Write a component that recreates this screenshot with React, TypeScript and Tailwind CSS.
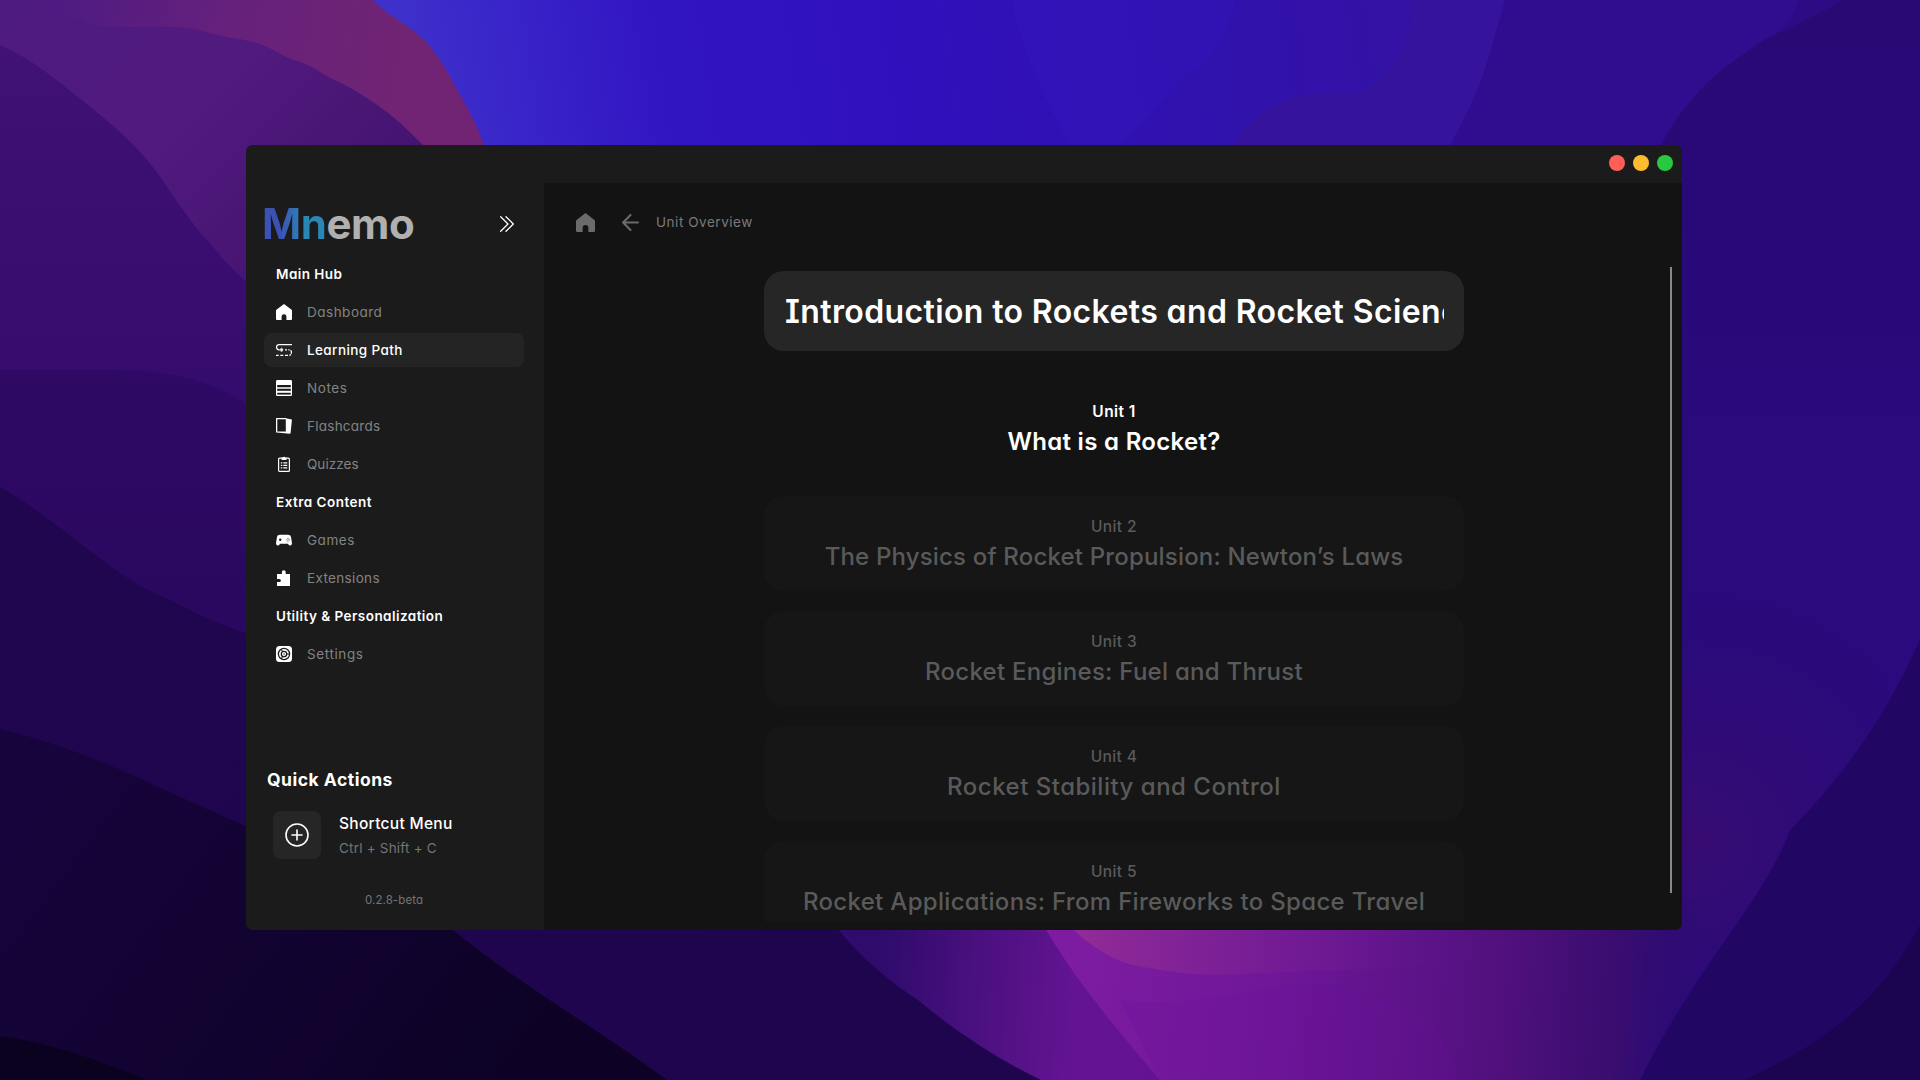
import React from "react";

const FONT =
  "font-['Inter','Noto_Sans',sans-serif] [font-feature-settings:'cv11','cv08','calt'_0]";

function Wallpaper() {
  return (
    <svg className="absolute inset-0 h-full w-full" viewBox="0 0 1920 1080" preserveAspectRatio="none">
      <defs>
        <linearGradient id="blue" gradientUnits="userSpaceOnUse" x1="420" y1="120" x2="1480" y2="-40">
          <stop offset="0" stopColor="#3e30cb" />
          <stop offset="0.1" stopColor="#3824c8" />
          <stop offset="0.22" stopColor="#3216c2" />
          <stop offset="0.45" stopColor="#3010bc" />
          <stop offset="0.75" stopColor="#3012ac" />
          <stop offset="1" stopColor="#3411a0" />
        </linearGradient>
        <linearGradient id="pink" gradientUnits="userSpaceOnUse" x1="60" y1="0" x2="400" y2="60">
          <stop offset="0" stopColor="#4f1b82" />
          <stop offset="0.5" stopColor="#66217c" />
          <stop offset="1" stopColor="#702473" />
        </linearGradient>
        <linearGradient id="violet" gradientUnits="userSpaceOnUse" x1="0" y1="0" x2="300" y2="300">
          <stop offset="0" stopColor="#4e1b80" />
          <stop offset="0.5" stopColor="#511a7e" />
          <stop offset="1" stopColor="#43136f" />
        </linearGradient>
        <linearGradient id="plum" gradientUnits="userSpaceOnUse" x1="0" y1="60" x2="0" y2="500">
          <stop offset="0" stopColor="#3f1274" />
          <stop offset="0.5" stopColor="#380d6f" />
          <stop offset="1" stopColor="#310b6c" />
        </linearGradient>
        <linearGradient id="deep" gradientUnits="userSpaceOnUse" x1="0" y1="370" x2="0" y2="640">
          <stop offset="0" stopColor="#2f0965" />
          <stop offset="1" stopColor="#2a085f" />
        </linearGradient>
        <linearGradient id="ink" gradientUnits="userSpaceOnUse" x1="100" y1="560" x2="700" y2="1080">
          <stop offset="0" stopColor="#20064f" />
          <stop offset="1" stopColor="#1e054d" />
        </linearGradient>
        <linearGradient id="night" gradientUnits="userSpaceOnUse" x1="60" y1="750" x2="500" y2="1080">
          <stop offset="0" stopColor="#17043c" />
          <stop offset="1" stopColor="#0d0226" />
        </linearGradient>
        <linearGradient id="glow" gradientUnits="userSpaceOnUse" x1="880" y1="1000" x2="1700" y2="1040">
          <stop offset="0" stopColor="#2f0b6c" />
          <stop offset="0.12" stopColor="#4b1080" />
          <stop offset="0.24" stopColor="#641492" />
          <stop offset="0.5" stopColor="#631390" />
          <stop offset="0.75" stopColor="#4f107b" />
          <stop offset="0.9" stopColor="#390d70" />
          <stop offset="1" stopColor="#2b0a6e" stopOpacity="0" />
        </linearGradient>
        <linearGradient id="magenta" gradientUnits="userSpaceOnUse" x1="1080" y1="940" x2="1560" y2="1000">
          <stop offset="0" stopColor="#7d1ca0" />
          <stop offset="0.4" stopColor="#6f1798" />
          <stop offset="1" stopColor="#551283" stopOpacity="0" />
        </linearGradient>
        <linearGradient id="rose" gradientUnits="userSpaceOnUse" x1="1080" y1="940" x2="1460" y2="960">
          <stop offset="0" stopColor="#912b97" />
          <stop offset="1" stopColor="#66188e" stopOpacity="0" />
        </linearGradient>
        <linearGradient id="right" gradientUnits="userSpaceOnUse" x1="0" y1="0" x2="0" y2="420">
          <stop offset="0" stopColor="#290974" />
          <stop offset="1" stopColor="#2a0a7c" />
        </linearGradient>
        <radialGradient id="haze" gradientUnits="userSpaceOnUse" cx="1700" cy="840" r="250">
          <stop offset="0" stopColor="#370c72" />
          <stop offset="1" stopColor="#2c0a76" stopOpacity="0" />
        </radialGradient>
      </defs>
      <rect width="1920" height="1080" fill="url(#blue)" />
      <path d="M1012 0H1235C1232 30 1215 60 1180 80C1150 115 1110 170 1075 155C1050 110 1020 50 1012 0Z" fill="#3318bf" opacity="0.35" />
      <path d="M1415 0C1410 45 1385 94 1345 94C1300 94 1270 92 1233 145V200H1700V0Z" fill="#35139c" />
      <path d="M1505 0C1490 50 1485 85 1450 145V200H1920V0Z" fill="#300d8e" />
      <path d="M1799 0C1793 15 1788 25 1780 31L1756 45L1800 60L1842 0Z" fill="#2d0b84" />
      <path d="M1842 0C1815 18 1780 30 1756 45C1735 60 1720 70 1707 83C1690 100 1672 122 1661 145L1600 300V900H1300V1080H1920V0Z" fill="url(#right)" />
      <rect x="1450" y="590" width="470" height="490" fill="url(#haze)" />
      <path d="M700 900H1720V1080H700Z" fill="url(#glow)" />
      <path d="M1920 640C1880 730 1830 790 1790 830C1765 900 1700 960 1640 1080H1920Z" fill="#220664" />
      <path d="M1920 925C1880 1000 1830 1040 1745 1080H1920Z" fill="#1b0450" />
      <path d="M1030 900C1060 960 1100 1010 1160 1080H1560V900Z" fill="url(#magenta)" />
      <path d="M1060 915C1090 950 1120 965 1150 968C1200 978 1240 974 1290 972C1350 968 1400 972 1450 960V915Z" fill="url(#rose)" />
      <path d="M1120 1000C1210 1010 1270 980 1315 983C1360 985 1380 1000 1410 1010C1440 1020 1450 1050 1460 1080H1160Z" fill="#6a1199" opacity="0.2" />
      <path d="M0 0H373C385 14 405 22 422 38C431 46 436 54 441 62C450 75 454 84 459 93C470 112 478 128 484 145V400H0Z" fill="url(#pink)" />
      <path d="M0 0H35C70 15 90 27 110 27C150 27 190 25 202 31C225 38 240 38 257 43C275 49 285 58 294 60C312 64 322 75 337 81C352 88 368 98 380 107C398 120 410 132 423 145V400H0Z" fill="url(#violet)" />
      <path d="M0 45C30 58 50 75 73 93C92 108 108 121 122 134C142 152 158 172 171 193C185 212 195 228 208 241C220 256 232 270 250 285V500H0Z" fill="url(#plum)" />
      <path d="M0 370H110C170 370 215 380 250 407V800H0Z" fill="url(#deep)" />
      <path d="M0 487C60 520 110 575 160 595C190 610 220 625 246 633L700 900L839 930C862 960 895 985 918 1000C960 1035 1000 1060 1041 1080H0Z" fill="url(#ink)" />
      <path d="M0 729C90 750 150 785 246 826C340 870 410 900 453 930C520 985 600 1030 667 1080H0Z" fill="url(#night)" />
      <path d="M0 1036C60 1045 110 1065 147 1080H0Z" fill="#0b0220" />
    </svg>
  );
}

function HomeIcon({ className }: { className: string }) {
  return (
    <svg viewBox="0 0 16 16" className={className} fill="currentColor">
      <path d="M8 0 .7 5.6A1.8 1.8 0 0 0 0 7v8a1 1 0 0 0 1 1h4.6v-3.4a2.4 2.4 0 0 1 4.8 0V16H15a1 1 0 0 0 1-1V7a1.8 1.8 0 0 0-.7-1.4Z" />
    </svg>
  );
}

const icons: Record<string, React.ReactNode> = {
  path: (
    <g fill="none" stroke="currentColor" strokeWidth="1.3">
      <path d="M16 2.600H3A2.400 2.400 0 0 0 .6 5c0 1.600 1 2.800 2.600 2.800" />
      <path d="M3.200 7.800h4M9 7.800h2M12.300 7.800h1.200" />
      <path d="M5.600 5.700v4.200M4.400 6.700 6.800 9M6.800 6.700 4.400 9" strokeWidth=".8" />
      <path d="M14.400 8.300c1 .6 1.200 2.200.8 3.400" />
      <path d="M0 13.300h2.700M4.300 13.300h3M9 13.300h3M13.300 13.300l1.700-.7" />
    </g>
  ),
  notes: (
    <g>
      <rect width="16" height="16" rx="1.200" fill="currentColor" />
      <rect x="1.200" y="5" width="13.600" height="2" fill="#1b1b1b" />
      <rect x="1.200" y="7" width="13.600" height="2" fill="#c4c4c4" />
      <rect x="1.200" y="9" width="13.600" height="1.800" fill="#1b1b1b" />
      <rect x="1.200" y="12.800" width="13.600" height="1.800" fill="#1b1b1b" />
    </g>
  ),
  cards: (
    <g>
      <path fillRule="evenodd" fill="currentColor" d="M.5 0H10a.6.6 0 0 1 .6.600L15 1.200a1 1 0 0 1 .9 1L14.600 15a1 1 0 0 1-1 .8L8.500 15.200 .6 14.600A.6.600 0 0 1 0 14V.5A.5.500 0 0 1 .5 0ZM1.300 1.300v12.100h8.500V1.300Z" />
    </g>
  ),
  quiz: (
    <g fill="none" stroke="currentColor">
      <rect x="2.600" y="2.200" width="10.800" height="13.200" rx="1" strokeWidth="1.200" />
      <path d="M5.500 1.500h1.300a1.300 1.300 0 0 1 2.400 0h1.300V4h-5Z" fill="currentColor" stroke="none" />
      <path d="M4.800 6.800h1.500M7.300 6.800h4M4.800 9.300h1.500M7.300 9.300h4M4.800 11.900h1.500M7.300 11.900h4" strokeWidth="1.200" />
    </g>
  ),
  games: (
    <g>
      <path fill="currentColor" d="M4 2.700h8c1.800 0 2.600.7 3 2.400l.9 5.500c.3 1.800-.5 2.900-1.600 2.900-.9 0-1.500-.5-2-1.300l-.2-.4H3.900l-.2.400c-.5.800-1.100 1.300-2 1.300-1.100 0-1.900-1.100-1.600-2.900L1 5.100c.4-1.700 1.200-2.400 3-2.400Z" />
      <circle cx="4.200" cy="7.700" r="1.200" fill="#1b1b1b" />
      <g fill="#777">
        <circle cx="11.900" cy="6.500" r=".7" />
        <circle cx="11.900" cy="9" r=".7" />
        <circle cx="10.600" cy="7.750" r=".6" />
        <circle cx="13.200" cy="7.750" r=".7" />
      </g>
    </g>
  ),
  ext: (
    <path fill="currentColor" d="M1 4h4.900V2.100a1.900 1.900 0 1 1 3.800 0V4H14v12H1v-4h2.400a1.500 1.500 0 0 0 0-3H1Z" />
  ),
  settings: (
    <g>
      <rect width="16" height="16" rx="3.500" fill="currentColor" />
      <g fill="none" stroke="#1b1b1b">
        <circle cx="8" cy="8" r="5.600" strokeWidth="1.300" />
        <circle cx="8" cy="8" r="2.700" strokeWidth="1.300" />
        <path d="M10.500 8h3M6.700 5.800 5.200 3.300M6.700 10.200l-1.500 2.500" strokeWidth="1.100" />
        <circle cx="8" cy="8" r=".7" fill="#1b1b1b" stroke="none" />
      </g>
    </g>
  ),
};

type Row = { label: string; icon?: string; track: string; active?: boolean };

const rows: Row[] = [
  { label: "Main Hub", track: "tracking-[0.45px]" },
  { label: "Dashboard", icon: "home", track: "tracking-[0.5px]" },
  { label: "Learning Path", icon: "path", track: "tracking-[0.4px]", active: true },
  { label: "Notes", icon: "notes", track: "tracking-[0.6px]" },
  { label: "Flashcards", icon: "cards", track: "tracking-[0.25px]" },
  { label: "Quizzes", icon: "quiz", track: "tracking-[0.05px]" },
  { label: "Extra Content", track: "tracking-[0.48px]" },
  { label: "Games", icon: "games", track: "tracking-[0.55px]" },
  { label: "Extensions", icon: "ext", track: "tracking-[0.34px]" },
  { label: "Utility & Personalization", track: "tracking-[0.45px]" },
  { label: "Settings", icon: "settings", track: "tracking-[0.6px]" },
];

function NavRow({ row }: { row: Row }) {
  if (!row.icon) {
    return (
      <div className="flex h-[38px] items-center pl-3">
        <span className={`text-[13.5px] font-semibold text-white ${row.track}`}>{row.label}</span>
      </div>
    );
  }
  return (
    <div className="flex h-[38px] items-center">
      <div className={`flex h-[34px] w-[260px] items-center gap-[15px] rounded-lg pl-3 ${row.active ? "bg-[#242424]" : ""}`}>
        {row.icon === "home" ? (
          <HomeIcon className="h-4 w-4 text-white" />
        ) : (
          <svg viewBox="0 0 16 16" className="h-4 w-4 text-white">{icons[row.icon]}</svg>
        )}
        <span className={`text-[13.5px] ${row.active ? "font-medium text-white" : "text-[#838383]"} ${row.track}`}>{row.label}</span>
      </div>
    </div>
  );
}

const units = [
  { n: "Unit 1", title: "What is a Rocket?", track: "tracking-[0.3px]" },
  { n: "Unit 2", title: "The Physics of Rocket Propulsion: Newton’s Laws", track: "tracking-[0.18px]" },
  { n: "Unit 3", title: "Rocket Engines: Fuel and Thrust", track: "tracking-[0.26px]" },
  { n: "Unit 4", title: "Rocket Stability and Control", track: "tracking-[0.5px]" },
  { n: "Unit 5", title: "Rocket Applications: From Fireworks to Space Travel", track: "tracking-[0.32px]" },
];

function Sidebar() {
  return (
    <aside className="flex w-[298px] flex-col bg-[#1b1b1b] pl-[18px]">
      <div className="flex h-[72px] items-center justify-between pt-[9px] pr-[30px]">
        <div className="-ml-[2px] font-['Inter',sans-serif] text-[42px] leading-none font-bold tracking-[-0.4px] text-[#b0b0b0]">
          <span className="bg-linear-to-r from-[#3b52b4] from-30% to-[#2a86b4] to-65% bg-clip-text text-transparent">Mn</span>emo
        </div>
        <svg viewBox="0 0 14 16" className="h-4 w-[14px]" fill="none" stroke="#fff" strokeWidth="1.300" strokeLinecap="round" strokeLinejoin="round">
          <path d="m.7.700 7.300 7.300-7.300 7.300M6 .7 13.300 8 6 15.300" />
        </svg>
      </div>
      <nav>{rows.map((r) => <NavRow key={r.label} row={r} />)}</nav>
      <div className="mt-[95px] flex h-6 items-center pl-[3px]">
        <span className="text-[17.5px] font-bold tracking-[0.5px] text-white">Quick Actions</span>
      </div>
      <div className="mt-[19px] flex h-12 items-center gap-[18px] pl-[9px]">
        <div className="grid h-12 w-12 place-items-center rounded-lg bg-[#262626]">
          <svg viewBox="0 0 24 24" className="h-6 w-6" fill="none" stroke="#fff" strokeWidth="1.600">
            <circle cx="12" cy="12" r="11" />
            <path d="M12 7v10M7 12h10" strokeLinecap="round" />
          </svg>
        </div>
        <div className="flex flex-col gap-[2px] pt-[2px]">
          <span className="text-[15.5px] leading-[22px] font-medium tracking-[0.3px] text-white">Shortcut Menu</span>
          <span className="text-[13.5px] leading-[22px] tracking-[0.2px] text-[#757575]">Ctrl + Shift + C</span>
        </div>
      </div>
      <div className="mt-[32px] flex h-5 items-center justify-center pr-5">
        <span className="text-[11.5px] tracking-[0.1px] text-[#757575]">0.2.8-beta</span>
      </div>
    </aside>
  );
}

export default function App() {
  return (
    <div className={`relative h-[1080px] w-[1920px] overflow-hidden bg-[#1e0650] pt-[145px] pl-[246px] ${FONT}`}>
      <Wallpaper />
      <div className="relative flex h-[785px] w-[1436px] flex-col overflow-hidden rounded-[7px] bg-[#131313]">
        <header className="flex h-[38px] shrink-0 items-center justify-end gap-2 bg-[#1b1b1b] pr-[9px] pb-[2px]">
          <span className="h-4 w-4 rounded-full bg-[#ff5f57]" />
          <span className="h-4 w-4 rounded-full bg-[#febc2e]" />
          <span className="h-4 w-4 rounded-full bg-[#28c840]" />
        </header>
        <div className="flex min-h-0 flex-1">
          <Sidebar />
          <main className="flex min-w-0 flex-1 flex-col">
            <div className="flex h-[78px] shrink-0 items-center pl-8 text-[#6b6b6b]">
              <HomeIcon className="h-[19px] w-[19px]" />
              <svg viewBox="0 0 17 17" className="ml-[27px] h-[17px] w-[17px]" fill="none" stroke="currentColor" strokeWidth="2" strokeLinecap="round" strokeLinejoin="round">
                <path d="M16 8.500H1.200M8.500 1 1.100 8.500 8.500 16" />
              </svg>
              <span className="ml-[17px] text-[13.5px] tracking-[0.54px] text-[#7a7a7a]">Unit Overview</span>
            </div>
            <div className="mt-[6px] flex min-h-0 flex-1">
              <div className="ml-[220px] flex h-[655px] w-[700px] flex-col overflow-hidden pt-1">
                <div className="flex h-20 shrink-0 items-center rounded-[20px] bg-[#262626] px-5 pt-[2px]">
                  <div className="overflow-hidden pl-px whitespace-nowrap text-white">
                    <span className="text-[32px] font-semibold tracking-[0.38px]">Introduction to Rockets and Rocket Science</span>
                  </div>
                </div>
                <div className="mt-[30px] flex flex-col gap-5">
                  {units.map((u, i) => (
                    <section
                      key={u.n}
                      className={`flex h-[95px] shrink-0 flex-col items-center rounded-[20px] pt-[20px] ${i === 0 ? "text-white" : "bg-[#161616] text-[#5a5a5a]"}`}
                    >
                      <span className={`text-[15.5px] leading-[22px] tracking-[0.4px] ${i === 0 ? "font-semibold" : "font-[450]"}`}>{u.n}</span>
                      <span className={`mt-1 text-[24px] leading-[30px] whitespace-nowrap ${i === 0 ? "font-semibold" : "font-[450]"} ${u.track}`}>{u.title}</span>
                    </section>
                  ))}
                </div>
              </div>
              <div className="mr-[10px] ml-auto h-[626px] w-[2px] bg-[#898989]" />
            </div>
          </main>
        </div>
      </div>
    </div>
  );
}
